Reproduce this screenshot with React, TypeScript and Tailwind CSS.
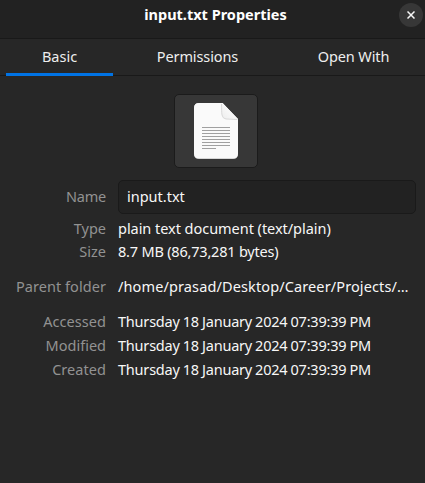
import React from "react";

type RowProps = {
  label: string;
  value: string;
  row: string;
  labelTracking: string;
  valueTracking: string;
};

function Row({ label, value, row, labelTracking, valueTracking }: RowProps) {
  return (
    <div className={`flex items-center ${row}`}>
      <dt className={`w-[106px] shrink-0 text-right whitespace-nowrap text-[#929292] ${labelTracking}`}>{label}</dt>
      <dd className={`ml-3 whitespace-nowrap ${valueTracking}`}>{value}</dd>
    </div>
  );
}

function DocumentIcon() {
  return (
    <svg width="44" height="57" viewBox="0 0 44 57" aria-hidden="true">
      <defs>
        <linearGradient id="fold" x1="0" y1="1" x2="0.6" y2="0.4">
          <stop offset="0" stopColor="#ececec" />
          <stop offset="1" stopColor="#fafafa" />
        </linearGradient>
      </defs>
      <path d="M5 0H28.5L44 16V51Q44 56 39 56H5Q0 56 0 51V5Q0 0 5 0Z" fill="#b5b5b5" />
      <path d="M5 0H28.5L44 16V50.5Q44 55.5 39 55.5H5Q0 55.5 0 50.5V5Q0 0 5 0Z" fill="#fafafa" />
      <path d="M27.5 0C28 6 27.5 9 28 12Q28.7 15.6 32 16C36 16.4 40 16 44 16.5L28.5 0Z" fill="url(#fold)" />
      <path d="M27.5 1C27.8 6 27.4 9 28 12Q28.7 15.7 32 16C36 16.5 40 16.1 43.5 16.5" fill="none" stroke="#d0d0d0" strokeWidth="0.8" />
      <path d="M8 24.5H36M8 27.5H36M8 30.5H36M8 33.5H36M8 36.5H36M8 39.5H36M8 42.5H36M8 45.5H22" stroke="#a0a0a0" />
    </svg>
  );
}

const DATE_TRACKING = "tracking-[-0.21px] [word-spacing:-0.5px]";

export default function App() {
  return (
    <main className="h-[483px] w-[425px] overflow-hidden bg-[#272727] font-['Noto_Sans',sans-serif] text-[14.5px] leading-5 text-[#f7f7f7]">
      <header className="flex h-[39px] items-start border-b border-[#191919] bg-[#222222]">
        <h1 className="ml-8 flex-1 pt-1 text-center font-bold text-white">input.txt Properties</h1>
        <button aria-label="Close" className="mt-[3px] mr-0.5 flex size-6 items-center justify-center rounded-full bg-[#373737]">
          <svg width="8" height="8" viewBox="0 0 8 8">
            <path d="M0.5 0.5L7.5 7.5M7.5 0.5L0.5 7.5" stroke="#f7f7f7" strokeWidth="1.5" />
          </svg>
        </button>
      </header>
      <nav className="flex h-[37px] border-b border-[#191919] pl-1.5 text-[#eeeeee]">
        <button className="-mb-px h-[37px] w-[107px] border-b-3 border-[#0073e5]">Basic</button>
        <button className="ml-[22px] h-[34px] w-[125px] tracking-[-0.1px]">Permissions</button>
        <button className="ml-[31px] h-[34px] w-[125px] tracking-[-0.1px]">Open With</button>
      </nav>
      <section className="pt-[18px]">
        <button aria-label="File icon" className="ml-[174px] flex h-[74px] w-[84px] items-center justify-center rounded-[5px] border border-[#1b1b1b] bg-[#373737]">
          <DocumentIcon />
        </button>
        <dl className="pt-3">
          <div className="flex h-[34px] items-center">
            <dt className="w-[106px] shrink-0 pb-0.5 text-right tracking-[-0.2px] text-[#929292]">Name</dt>
            <dd className="ml-3 flex h-[34px] w-[298px] items-center rounded-[5px] border border-[#1a1a1a] bg-[#222222] pb-0.5 pl-2">input.txt</dd>
          </div>
          <Row label="Type" value="plain text document (text/plain)" row="mt-0.5 h-6" labelTracking="" valueTracking="tracking-[-0.04px]" />
          <Row label="Size" value="8.7 MB (86,73,281 bytes)" row="h-[22px]" labelTracking="" valueTracking="tracking-[-0.2px]" />
          <Row label="Parent folder" value="/home/prasad/Desktop/Career/Projects/…" row="mt-3 h-6" labelTracking="tracking-[0.06px]" valueTracking="tracking-[0.12px]" />
          <Row label="Accessed" value="Thursday 18 January 2024 07:39:39 PM" row="mt-[11px] h-6" labelTracking="tracking-[0.05px]" valueTracking={DATE_TRACKING} />
          <Row label="Modified" value="Thursday 18 January 2024 07:39:39 PM" row="h-6" labelTracking="" valueTracking={DATE_TRACKING} />
          <Row label="Created" value="Thursday 18 January 2024 07:39:39 PM" row="h-6" labelTracking="tracking-[0.05px]" valueTracking={DATE_TRACKING} />
        </dl>
      </section>
    </main>
  );
}
